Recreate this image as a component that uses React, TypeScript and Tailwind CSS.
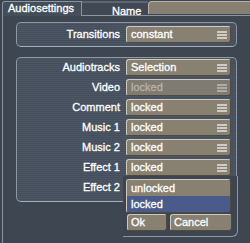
import React from 'react';

const rows = [
  { label: 'Audiotracks', value: 'Selection' },
  { label: 'Video', value: 'locked', disabled: true },
  { label: 'Comment', value: 'locked' },
  { label: 'Music 1', value: 'locked' },
  { label: 'Music 2', value: 'locked' },
  { label: 'Effect 1', value: 'locked' },
  { label: 'Effect 2', value: 'unlocked', open: true },
];

const MenuIcon = ({ dim }: { dim?: boolean }) => (
  <svg width="10" height="8" viewBox="0 0 10 8" className="shrink-0">
    <g stroke={dim ? '#d2cec6' : '#ffffff'} strokeWidth="1.2">
      <line x1="0" y1="1" x2="10" y2="1" />
      <line x1="0" y1="4" x2="10" y2="4" />
      <line x1="0" y1="7" x2="10" y2="7" />
    </g>
  </svg>
);

const bevel = 'border border-t-[#cfc9bc] border-l-[#cfc9bc] border-r-[#4e4a42] border-b-[#4e4a42]';

const Select = ({ value, disabled }: { value: string; disabled?: boolean }) => (
  <div
    className={`w-[105px] h-[17px] flex items-center justify-between pl-[4px] pr-[3px] rounded-[3px] ${bevel} ${
      disabled ? 'bg-[#7f7b72] text-[#b8b3aa]' : 'bg-[#888172] text-white'
    }`}
  >
    <span className="leading-none">{value}</span>
    <MenuIcon dim={disabled} />
  </div>
);

const Label = ({ children }: { children: React.ReactNode }) => (
  <div className="w-[103px] text-right text-white leading-none">{children}</div>
);

const group =
  'ml-[13px] w-[221px] rounded-[5px] border border-[#8d98a4] border-b-[#a3adb7] bg-[repeating-linear-gradient(180deg,#4c5664_0px,#4c5664_1px,#454f5c_1px,#454f5c_2px)]';

export default function App() {
  return (
    <div className="w-[250px] h-[243px] overflow-hidden bg-[#3c4550] font-['Liberation_Sans',Arial,sans-serif] text-[11px] [-webkit-text-stroke:0.3px_currentColor]">
      {/* tab strip */}
      <div className="flex h-[15px] items-end">
        <div className="relative z-10 ml-[2px] -mb-[1px] w-[80px] h-[15px] bg-[#444e59] border-t border-l border-r border-[#8b95a0] rounded-tl-[3px] pl-[5px] text-white leading-[13px]">
          Audiosettings
        </div>
        <div className="w-[66px] h-[14px] bg-[#3f4853] border-t-[2px] border-[#5c6670] pl-[30px] text-white leading-[16px]">
          Name
        </div>
        <div className="flex-1 h-[13px] mb-[1px] bg-[#877f71] border-t border-l border-[#b9b2a4] rounded-tl-[4px]" />
      </div>

      {/* main panel */}
      <div className="relative h-[228px] ml-[2px] border-t border-l border-[#8b95a0] bg-[#3d4651] pt-[6px]">
        <div className={`${group} h-[25px] flex items-center gap-[6px] pr-[5px]`}>
          <Label>Transitions</Label>
          <Select value="constant" />
        </div>

        <div className={`${group} mt-[10px] h-[145px] pt-[1px] flex flex-col gap-[3px]`}>
          {rows.map((r) => (
            <div key={r.label} className="flex items-center gap-[6px] h-[17px]">
              <Label>{r.label}</Label>
              {!r.open && <Select value={r.value} disabled={r.disabled} />}
            </div>
          ))}
        </div>

        {/* open dropdown popup */}
        <div className="absolute left-[120px] top-[160px] w-[115px] h-[61px] rounded-br-[6px] border-r border-b border-[#8d98a4] bg-[#3c4550] pl-[3px] pt-[3px]">
          <div className={`w-[105px] rounded-[3px] overflow-hidden ${bevel}`}>
            <div className="h-[16px] bg-[#888172] pl-[4px] text-white leading-[16px]">unlocked</div>
            <div className="h-[16px] bg-[#4a5b8b] pl-[4px] text-white leading-[16px]">locked</div>
          </div>
          <div className="flex gap-[3px] mt-[1px] pl-[1px]">
            <div className={`w-[40px] h-[17px] rounded-[3px] bg-[#888172] ${bevel} pl-[3px] text-white leading-[15px]`}>
              Ok
            </div>
            <div className={`w-[62px] h-[17px] rounded-[3px] bg-[#888172] ${bevel} pl-[3px] text-white leading-[15px]`}>
              Cancel
            </div>
          </div>
        </div>
      </div>
    </div>
  );
}
